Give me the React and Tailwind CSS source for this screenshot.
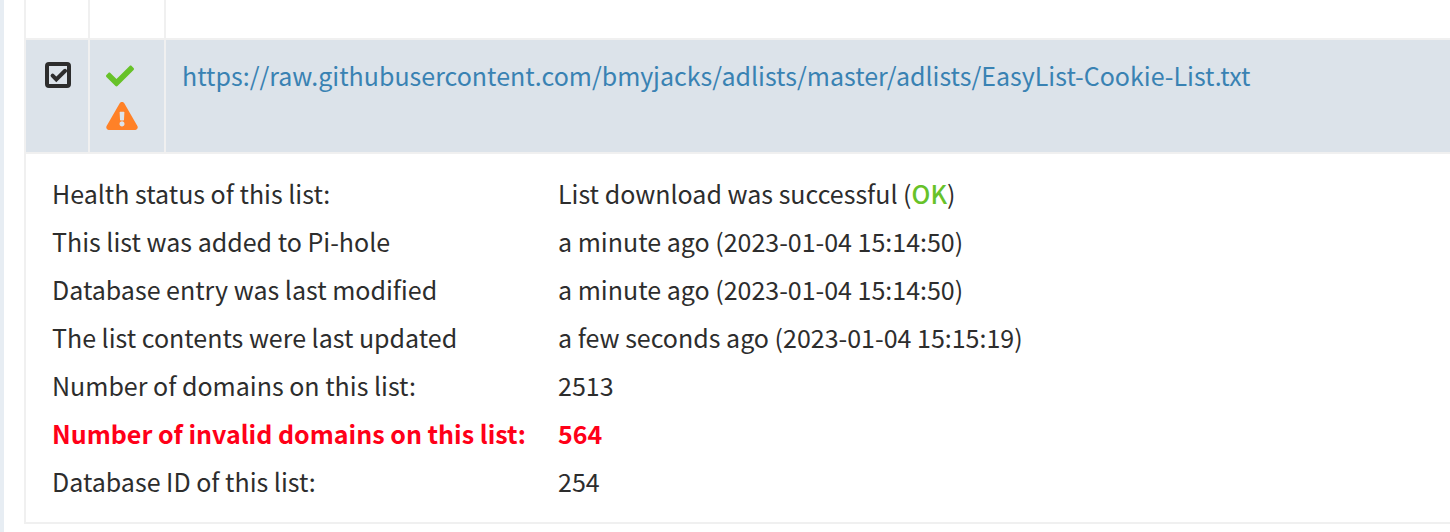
import React from "react";
import { FaCheck, FaExclamationTriangle } from "react-icons/fa";

const address =
  "https://raw.githubusercontent.com/bmyjacks/adlists/master/adlists/EasyList-Cookie-List.txt";

const details = [
  { label: "This list was added to Pi-hole", value: "a minute ago (2023-01-04 15:14:50)" },
  { label: "Database entry was last modified", value: "a minute ago (2023-01-04 15:14:50)" },
  { label: "The list contents were last updated", value: "a few seconds ago (2023-01-04 15:15:19)" },
  { label: "Number of domains on this list:", value: "2513" },
  { label: "Number of invalid domains on this list:", value: "564", invalid: true },
  { label: "Database ID of this list:", value: "254" },
];

function ListDetails() {
  return (
    <table>
      <tbody>
        <tr>
          <th scope="row" className="w-[506px] px-[10px] py-1 text-left font-normal">
            Health status of this list:
          </th>
          <td className="px-[10px] py-1">
            List download was successful (<span className="font-medium text-[#67c229]">OK</span>)
          </td>
        </tr>
        {details.map((item) => (
          <tr key={item.label} className={item.invalid ? "font-bold text-[#ff0018]" : ""}>
            <th
              scope="row"
              className={
                item.invalid
                  ? "whitespace-nowrap px-[10px] py-1 text-left font-bold"
                  : "px-[10px] py-1 text-left font-normal"
              }
            >
              {item.label}
            </th>
            <td className="px-[10px] py-1">{item.value}</td>
          </tr>
        ))}
      </tbody>
    </table>
  );
}

export default function App() {
  return (
    <div className="border-l-4 border-[#e7edf3] bg-white pb-2 pl-5 font-['Noto_Sans_CJK_SC','Source_Sans_Pro',sans-serif] text-[25px] leading-10 text-[#2d2d2d]">
      <table className="w-full border-separate border-spacing-0 border-b-2 border-l-2 border-[#f0f0f0]">
        <tbody>
          <tr className="h-[38px]">
            <td className="w-16 border-r-2 border-[#f0f0f0]"></td>
            <td className="w-[76px] border-r-2 border-[#f0f0f0]"></td>
            <td></td>
          </tr>
          <tr className="bg-[#dce3ea] align-top">
            <td className="border-y-2 border-r-2 border-[#f0f0f0] py-4 pl-[19px]">
              <label className="grid h-[38px] w-[26px] place-items-center">
                <input
                  type="checkbox"
                  defaultChecked
                  aria-label="Select list"
                  className="peer col-start-1 row-start-1 h-[26px] w-[26px] appearance-none rounded-[4px] border-4 border-[#2d2d2d]"
                />
                <svg
                  viewBox="0 0 26 26"
                  className="pointer-events-none invisible col-start-1 row-start-1 h-[26px] w-[26px] peer-checked:visible"
                >
                  <path
                    d="M7.6 13.6l3.7 3.8 8.8-8.6"
                    fill="none"
                    stroke="#2d2d2d"
                    strokeWidth="4"
                    strokeLinecap="round"
                  />
                </svg>
              </label>
            </td>
            <td className="border-y-2 border-r-2 border-[#f0f0f0] px-4 py-4">
              <div className="flex h-10 items-center">
                <FaCheck className="h-7 w-7 text-[#67c229]" title="Enabled" />
              </div>
              <div className="flex h-10 items-center">
                <FaExclamationTriangle className="h-7 w-8 text-[#ff8127]" title="Invalid domains" />
              </div>
            </td>
            <td className="border-y-2 border-[#f0f0f0] px-4 pb-[17px] pt-[15px]">
              <a href={address} className="text-[#3982b3]">
                {address}
              </a>
            </td>
          </tr>
          <tr>
            <td colSpan={3} className="px-4 pb-[17px] pt-[15px]">
              <ListDetails />
            </td>
          </tr>
        </tbody>
      </table>
    </div>
  );
}
